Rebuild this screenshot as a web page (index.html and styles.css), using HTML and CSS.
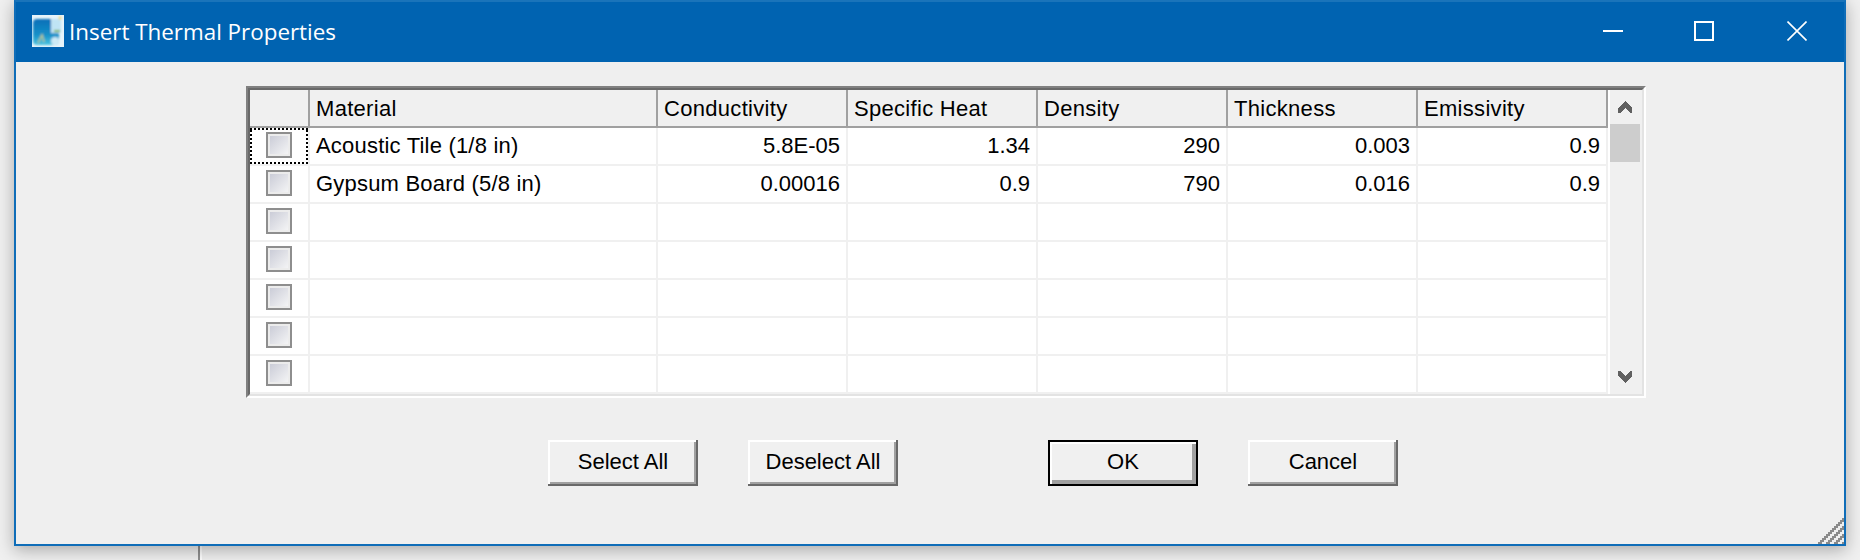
FILE: index.html
```html
<!DOCTYPE html>
<html lang="en">
<head>
    <meta charset="UTF-8">
    <meta name="viewport" content="width=device-width, initial-scale=1.0">
    <title>Insert Thermal Properties</title>
    <link rel="stylesheet" href="styles.css">
</head>
<body>

<div class="window">
    <!-- Title bar -->
    <div class="titlebar">
        <svg class="app-icon" width="32" height="32" viewBox="0 0 32 32">
            <defs>
                <linearGradient id="iconBlue" x1="0" y1="0" x2="0" y2="1">
                    <stop offset="0" stop-color="#0a6fb8"/>
                    <stop offset="0.6" stop-color="#1590c8"/>
                    <stop offset="1" stop-color="#4cc4e0"/>
                </linearGradient>
                <filter id="iconBlur"><feGaussianBlur stdDeviation="1"/></filter>
            </defs>
            <rect width="32" height="32" fill="#e6f3fa"/>
            <g filter="url(#iconBlur)">
                <rect x="1" y="4" width="26" height="26" rx="4" fill="url(#iconBlue)"/>
                <rect x="19" y="4" width="10" height="14" fill="#bfe4f4"/>
                <circle cx="23" cy="26" r="4" fill="#cdeaf6"/>
                <path d="M6 28 L10 20 L12 27" fill="none" stroke="#b8c890" stroke-width="1.5"/>
                <rect x="22" y="15" width="6" height="2" fill="#7cb04a"/>
                <circle cx="28" cy="3" r="1.5" fill="#f6d45a"/>
            </g>
        </svg>
        <span class="title">Insert Thermal Properties</span>
        <div class="controls">
            <svg class="ctl-min" width="20" height="20" viewBox="0 0 20 20"><rect y="9" width="20" height="2" fill="#fff"/></svg>
            <svg class="ctl-max" width="20" height="20" viewBox="0 0 20 20"><rect x="1" y="1" width="18" height="18" fill="none" stroke="#fff" stroke-width="2"/></svg>
            <svg width="20" height="20" viewBox="0 0 20 20"><path d="M0.5 0.5 L19.5 19.5 M19.5 0.5 L0.5 19.5" stroke="#fff" stroke-width="1.6"/></svg>
        </div>
    </div>

    <div class="content">
        <!-- Materials grid -->
        <div class="grid-outer">
            <div class="grid-inner">
                <table class="grid">
                    <colgroup>
                        <col class="col-check">
                        <col class="col-name">
                        <col class="col-num">
                        <col class="col-num">
                        <col class="col-num">
                        <col class="col-num">
                        <col class="col-num">
                    </colgroup>
                    <thead>
                        <tr>
                            <th></th>
                            <th>Material</th>
                            <th>Conductivity</th>
                            <th>Specific Heat</th>
                            <th>Density</th>
                            <th>Thickness</th>
                            <th>Emissivity</th>
                        </tr>
                    </thead>
                    <tbody>
                        <tr>
                            <td class="check focused"><span class="checkbox"></span></td>
                            <td>Acoustic Tile (1/8 in)</td>
                            <td class="num">5.8E-05</td>
                            <td class="num">1.34</td>
                            <td class="num">290</td>
                            <td class="num">0.003</td>
                            <td class="num">0.9</td>
                        </tr>
                        <tr>
                            <td class="check"><span class="checkbox"></span></td>
                            <td>Gypsum Board (5/8 in)</td>
                            <td class="num">0.00016</td>
                            <td class="num">0.9</td>
                            <td class="num">790</td>
                            <td class="num">0.016</td>
                            <td class="num">0.9</td>
                        </tr>
                        <tr><td class="check"><span class="checkbox"></span></td><td></td><td></td><td></td><td></td><td></td><td></td></tr>
                        <tr><td class="check"><span class="checkbox"></span></td><td></td><td></td><td></td><td></td><td></td><td></td></tr>
                        <tr><td class="check"><span class="checkbox"></span></td><td></td><td></td><td></td><td></td><td></td><td></td></tr>
                        <tr><td class="check"><span class="checkbox"></span></td><td></td><td></td><td></td><td></td><td></td><td></td></tr>
                        <tr><td class="check"><span class="checkbox"></span></td><td></td><td></td><td></td><td></td><td></td><td></td></tr>
                    </tbody>
                </table>
                <div class="scrollbar">
                    <div class="arrow">
                        <svg width="14" height="12" viewBox="0 0 14 12" shape-rendering="crispEdges"><path d="M7 0 L14 7 V12 H12 L7 7 L2 12 H0 V7 Z" fill="#606060"/></svg>
                    </div>
                    <div class="thumb"></div>
                    <div class="arrow arrow-down">
                        <svg width="14" height="12" viewBox="0 0 14 12" shape-rendering="crispEdges"><path d="M7 12 L14 5 V0 H12 L7 5 L2 0 H0 V5 Z" fill="#606060"/></svg>
                    </div>
                </div>
            </div>
        </div>

        <div class="buttons">
            <button type="button">Select All</button>
            <button type="button">Deselect All</button>
            <button type="button" class="default">OK</button>
            <button type="button">Cancel</button>
        </div>
    </div>

    <!-- Resize grip -->
    <svg class="grip" width="28" height="28" viewBox="0 0 14 14" shape-rendering="crispEdges">
        <defs>
            <pattern id="hatch" width="4" height="4" patternUnits="userSpaceOnUse">
                <path d="M2 0h2v1h-2z M1 1h2v1h-2z M0 2h2v1h-2z M3 3h1v1h-1z M0 3h1v1h-1z" fill="#8a8a8a"/>
            </pattern>
        </defs>
        <path d="M14 0 V14 H0 Z" fill="url(#hatch)"/>
    </svg>
</div>

<!-- Bit of the window behind the dialog -->
<div class="behind"></div>

</body>
</html>
```

FILE: styles.css
```css
* {
    box-sizing: border-box;
}
body {
    margin: 0;
    width: 1860px;
    height: 560px;
    overflow: hidden;
    background-color: #f0f0f0;
    font-family: "Liberation Sans", Arial, sans-serif;
    font-size: 22px;
    color: #000;
}
.window {
    position: relative;
    z-index: 1;
    width: 1832px;
    height: 546px;
    margin-left: 14px;
    background-color: #efefef;
    border: 2px solid #0f6db8;
    border-top-color: #1a74ba;
    box-shadow: 0 4px 16px rgba(0, 0, 0, 0.3);
}
.behind {
    width: 4px;
    height: 14px;
    margin-left: 198px;
    background-color: #fff;
    border-left: 2px solid #909090;
}

/* Title bar */
.titlebar {
    display: flex;
    align-items: center;
    height: 60px;
    padding-left: 16px;
    background-color: #0063b1;
    color: #fff;
}
.app-icon {
    flex: none;
    margin-top: -2px;
}
.title {
    margin-left: 5px;
    margin-top: -2px;
    font-family: "Open Sans", "Noto Sans", sans-serif;
    font-size: 22.4px;
}
.controls {
    display: flex;
    align-items: center;
    margin-left: auto;
    margin-top: -2px;
    padding-right: 37px;
}
.ctl-min {
    margin-right: 71px;
}
.ctl-max {
    margin-right: 73px;
}

/* Grid */
.content {
    padding: 24px 0 0 230px;
}
.grid-outer {
    width: 1400px;
    height: 312px;
    border: 2px solid;
    border-color: #808080 #fff #fff #808080;
}
.grid-inner {
    display: flex;
    height: 100%;
    border: 2px solid;
    border-color: #696969 #e3e3e3 #e3e3e3 #696969;
}
.grid {
    width: 1358px;
    table-layout: fixed;
    border-collapse: separate;
    border-spacing: 0;
    background-color: #fff;
}
.col-check {
    width: 60px;
}
.col-name {
    width: 348px;
}
.col-num {
    width: 190px;
}
.grid th, .grid td {
    height: 38px;
    padding: 0 6px;
    font-weight: normal;
    text-align: left;
    white-space: nowrap;
}
.grid th {
    padding-top: 2px;
    letter-spacing: 0.3px;
    background-color: #f0f0f0;
    border-right: 2px solid #a0a0a0;
    border-bottom: 2px solid #a0a0a0;
}
.grid td {
    letter-spacing: 0.2px;
    border-right: 2px solid #f0f0f0;
    border-bottom: 2px solid #f0f0f0;
}
.grid td.num {
    letter-spacing: 0;
    text-align: right;
}
.grid td.check {
    position: relative;
    padding: 0 0 2px;
    text-align: center;
}
.checkbox {
    display: block;
    width: 26px;
    height: 26px;
    margin: 0 auto;
    border: 2px solid #8e8e8e;
    outline: 2px solid #ececec;
    outline-offset: -4px;
    background: linear-gradient(135deg, #c6c8d4, #f8f8f8);
}
.focused::after {
    content: "";
    position: absolute;
    left: 0;
    top: 0;
    width: 58px;
    height: 36px;
    background:
        repeating-linear-gradient(90deg, #000 0 2px, transparent 2px 4px) left top / 100% 2px no-repeat,
        repeating-linear-gradient(90deg, #000 0 2px, transparent 2px 4px) left bottom / 100% 2px no-repeat,
        repeating-linear-gradient(0deg, #000 0 2px, transparent 2px 4px) left top / 2px 100% no-repeat,
        repeating-linear-gradient(0deg, #000 0 2px, transparent 2px 4px) right top / 2px 100% no-repeat;
}

/* Scrollbar */
.scrollbar {
    display: flex;
    flex-direction: column;
    width: 34px;
    padding-right: 2px;
    border-left: 2px solid #fff;
    background-color: #f0f0f0;
}
.arrow {
    display: flex;
    justify-content: center;
    align-items: center;
    height: 34px;
}
.arrow-down {
    margin-top: auto;
}
.thumb {
    height: 38px;
    background-color: #cdcdcd;
}

/* Buttons */
.buttons {
    display: flex;
    gap: 50px;
    margin: 42px 0 0 302px;
}
button {
    width: 150px;
    height: 46px;
    padding: 0 0 2px;
    border: none;
    background-color: #f0f0f0;
    font-family: "Liberation Sans", Arial, sans-serif;
    font-size: 22px;
    color: #000;
    box-shadow: inset -2px -2px 0 #696969, inset 2px 2px 0 #fff, inset -4px -4px 0 #a0a0a0;
}
button.default {
    margin-left: 100px;
    border: 2px solid #000;
    box-shadow: inset 2px 2px 0 #fff, inset -4px -4px 0 #a0a0a0;
}

.grip {
    position: absolute;
    right: 0;
    bottom: 0;
}
```
